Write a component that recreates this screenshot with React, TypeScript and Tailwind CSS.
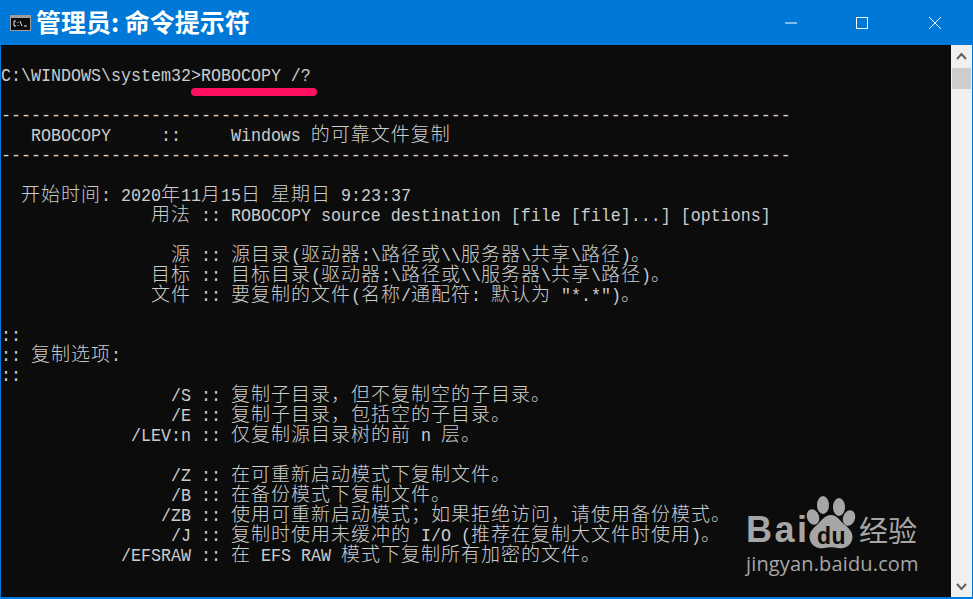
const dashes = "-".repeat(79);

const rows = [
  "",
  "C:\\WINDOWS\\system32>ROBOCOPY /?",
  "",
  dashes,
  "   ROBOCOPY     ::     Windows 的可靠文件复制",
  dashes,
  "",
  "  开始时间: 2020年11月15日 星期日 9:23:37",
  "               用法 :: ROBOCOPY source destination [file [file]...] [options]",
  "",
  "                 源 :: 源目录(驱动器:\\路径或\\\\服务器\\共享\\路径)。",
  "               目标 :: 目标目录(驱动器:\\路径或\\\\服务器\\共享\\路径)。",
  "               文件 :: 要复制的文件(名称/通配符: 默认为 \"*.*\")。",
  "",
  "::",
  ":: 复制选项:",
  "::",
  "                 /S :: 复制子目录，但不复制空的子目录。",
  "                 /E :: 复制子目录，包括空的子目录。",
  "             /LEV:n :: 仅复制源目录树的前 n 层。",
  "",
  "                 /Z :: 在可重新启动模式下复制文件。",
  "                 /B :: 在备份模式下复制文件。",
  "                /ZB :: 使用可重新启动模式；如果拒绝访问，请使用备份模式。",
  "                 /J :: 复制时使用未缓冲的 I/O (推荐在复制大文件时使用)。",
  "            /EFSRAW :: 在 EFS RAW 模式下复制所有加密的文件。",
];

// cjk glyphs take two cells, latin takes one
function ConsoleLine({ text }: { text: string }) {
  const parts = text.split(/([\u3000-\u9fff\uff00-\uffef]+)/);
  return (
    <div className="h-5 leading-5 whitespace-pre">
      {parts.map((part, i) =>
        i % 2 === 1 ? (
          <span key={i} className="text-[19px] leading-[0px] align-[-1px] tracking-[1px] font-['Noto_Sans_CJK_SC',sans-serif] font-light">
            {part}
          </span>
        ) : (
          <span key={i} className="inline-block scale-y-[1.15]">{part}</span>
        )
      )}
    </div>
  );
}

function Watermark() {
  return (
    <div className="absolute left-[746px] top-[494px] w-[176px] h-[84px] text-[#a6a6a6]">
      <div className="absolute left-0 top-[16px] text-[36px] leading-[40px] font-bold tracking-[2.5px] font-['Liberation_Sans',sans-serif]">Bai</div>
      <svg className="absolute left-[60px] top-0" width="54" height="58" viewBox="0 0 54 58" fill="currentColor">
        <ellipse cx="17" cy="11" rx="6" ry="9" />
        <ellipse cx="33" cy="13" rx="6" ry="9" />
        <ellipse cx="7" cy="23" rx="6" ry="8" transform="rotate(-20 7 23)" />
        <ellipse cx="43" cy="24" rx="6" ry="8" transform="rotate(20 43 24)" />
        <path d="M25 21c6 0 9 6 14 10 5 4 9 9 7 15-2 7-9 9-14 8-4-1-10-1-14 0-5 1-12-1-14-8-2-6 2-11 7-15 4-4 8-10 14-10z" />
      </svg>
      <div className="absolute left-[71px] top-[29px] text-[23px] leading-[26px] font-bold text-[#0c0c0c] font-['Liberation_Sans',sans-serif] tracking-[0.5px]">du</div>
      <div className="absolute left-[113px] top-[16px] text-[29px] leading-[38px] font-['Noto_Sans_CJK_SC',sans-serif]">经验</div>
      <div className="absolute left-0 top-[58px] text-[20px] leading-[24px] font-['Open_Sans',sans-serif] tracking-[0.15px]">jingyan.baidu.com</div>
    </div>
  );
}

export default function App() {
  return (
    <div className="relative w-[973px] h-[599px] flex flex-col overflow-hidden bg-[#0078d7] pl-px pr-px pb-[2px]">
      <div className="h-[45px] flex items-center text-white shrink-0">
        <svg className="ml-[9px]" width="21" height="16" viewBox="0 0 21 16">
          <rect x="0" y="0" width="21" height="16" fill="#9a9ea3" />
          <rect x="1" y="3" width="19" height="12" fill="#0c0c0c" />
          <path d="M6 6H4v5h2M8 7v1M8 10v1M10 6l2 5M14 11h3" stroke="#e6e6e6" strokeWidth="1" fill="none" />
        </svg>
        <span className="ml-[5px] -mt-[2px] text-[25px] font-bold font-['Noto_Sans_CJK_SC',sans-serif]">管理员: 命令提示符</span>
        <div className="ml-auto flex items-center">
          <svg width="12" height="12" viewBox="0 0 12 12" className="mr-[59px]"><path d="M0 6h12" stroke="#fff" /></svg>
          <svg width="12" height="12" viewBox="0 0 12 12" className="mr-[61px]"><rect x=".5" y=".5" width="11" height="11" fill="none" stroke="#fff" /></svg>
          <svg width="12" height="12" viewBox="0 0 12 12" className="mr-[31px]"><path d="M0 0l12 12M12 0L0 12" stroke="#fff" /></svg>
        </div>
      </div>
      <div className="flex-1 flex min-h-0">
        <div className="flex-1 bg-[#0c0c0c] text-[#cccccc] text-[16.67px] font-['Liberation_Mono',monospace] overflow-hidden">
          <div className="pt-px">
            {rows.map((row, i) => (
              <ConsoleLine key={i} text={row} />
            ))}
          </div>
        </div>
        <div className="w-[21px] bg-[#f0f0f0] flex flex-col items-center pt-px">
          <svg width="21" height="22" viewBox="0 0 21 22">
            <path d="M6 13l4.5-5 4.5 5" fill="none" stroke="#606060" strokeWidth="2" />
          </svg>
          <div className="w-[19px] h-[21px] bg-[#cdcdcd]" />
          <svg className="mt-auto" width="21" height="22" viewBox="0 0 21 22">
            <path d="M6 9l4.5 5 4.5-5" fill="none" stroke="#606060" strokeWidth="2" />
          </svg>
        </div>
      </div>
      <div className="absolute left-[191px] top-[88px] w-[126px] h-[8px] rounded-full bg-[#ff1060]" />
      <Watermark />
    </div>
  );
}
